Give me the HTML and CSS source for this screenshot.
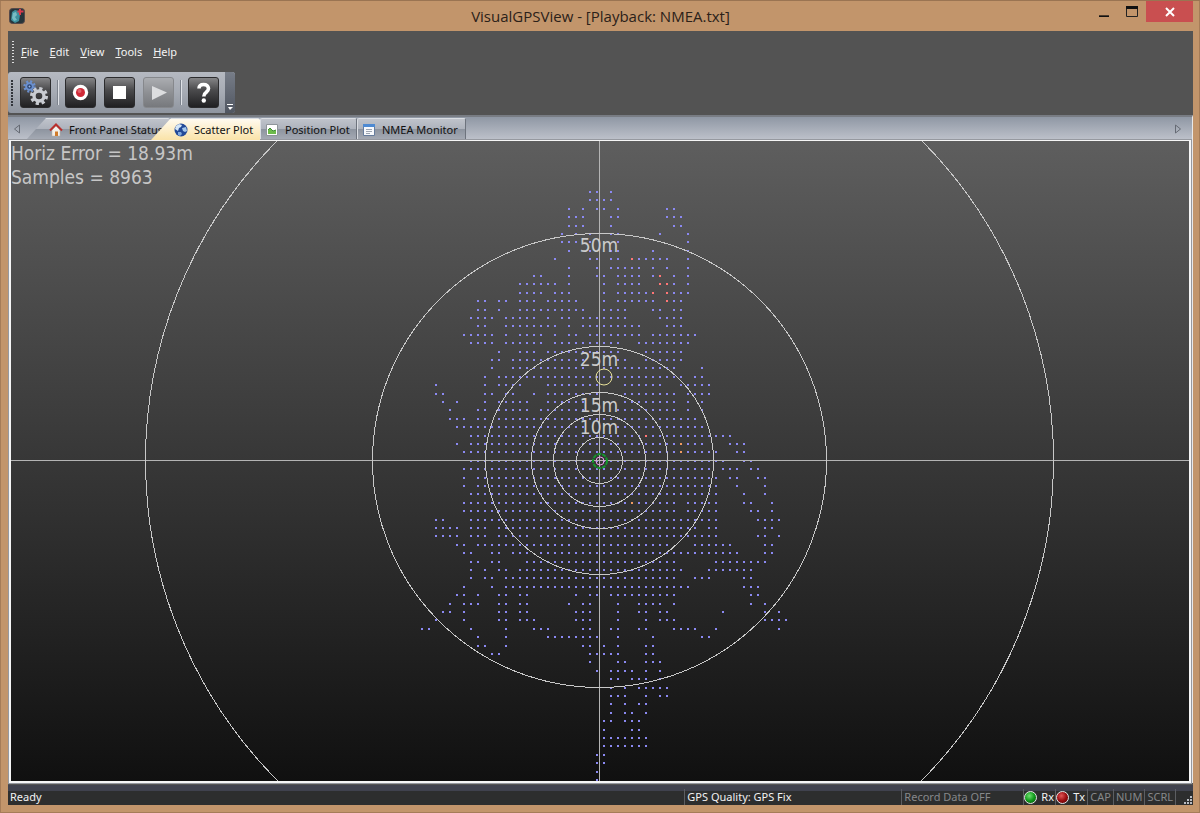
FILE: index.html
```html
<!doctype html>
<html lang="en-us">
  <head>
    <meta charset="utf-8">
    <meta name="viewport" content="width=device-width, initial-scale=1">
    <title>VisualGPSView - [Playback: NMEA.txt]</title>
    <link rel="stylesheet" href="styles.css">
    <script src="plot.js" defer></script>
  </head>

  <body>
    <header class="titlebar">
      <svg class="app-icon" viewBox="0 0 16 16">
        <rect x="0.5" y="0.5" width="15" height="15" rx="3" fill="#26343a" stroke="#55494a"/>
        <path d="M3 4l3-2 4 1 1 4-1 6-4 2-4-3z" fill="#3f8f9d"/>
        <path d="M4 5l3-1 1 3-2 2 2 3-3 1-2-3z" fill="#78bcc4"/>
        <path d="M11 1v6M8.500 3.500h6" stroke="#d93a4c" stroke-width="2"/>
      </svg>
      <h1>VisualGPSView - [Playback: NMEA.txt]</h1>
      <div class="winbuttons">
        <button class="min" aria-label="Minimize"><svg viewBox="0 0 12 12"><path d="M0 11h12" stroke="#111" stroke-width="2"/></svg></button>
        <button class="max" aria-label="Maximize"><svg viewBox="0 0 12 12"><path d="M0.500 1v9.500h11V1" fill="none" stroke="#222"/><path d="M0 1.500h12" stroke="#111" stroke-width="3"/></svg></button>
        <button class="close" aria-label="Close"><svg viewBox="0 0 10 10"><path d="M1 1l8 8M9 1l-8 8" stroke="#fff" stroke-width="2"/></svg></button>
      </div>
    </header>

    <main class="client">
      <nav class="menubar">
        <span class="grip"></span>
        <button><u>F</u>ile</button>
        <button><u>E</u>dit</button>
        <button><u>V</u>iew</button>
        <button><u>T</u>ools</button>
        <button><u>H</u>elp</button>
      </nav>

      <div class="toolbar">
        <span class="grip dark"></span>
        <button class="tool" aria-label="Settings">
          <svg viewBox="0 0 29 29">
            <circle cx="8.500" cy="8.500" r="5" fill="none" stroke="#6b90cf" stroke-width="2.400" stroke-dasharray="2 1.930"/>
            <circle cx="8.500" cy="8.500" r="3.300" fill="#28406c" stroke="#6b90cf" stroke-width="2"/>
            <circle cx="8.500" cy="8.500" r="1" fill="#9fb8e4"/>
            <circle cx="18" cy="18" r="7.500" fill="none" stroke="#c9ccd2" stroke-width="3" stroke-dasharray="3.200 2.690"/>
            <circle cx="18" cy="18" r="5" fill="none" stroke="#c9ccd2" stroke-width="3.400"/>
          </svg>
        </button>
        <span class="sep"></span>
        <button class="tool" aria-label="Record">
          <svg viewBox="0 0 29 29"><circle cx="14.500" cy="14.500" r="7.700" fill="#fff"/><circle cx="14.500" cy="14.500" r="4.500" fill="#cf2a38"/><circle cx="13.500" cy="13" r="2" fill="#e06169"/></svg>
        </button>
        <button class="tool" aria-label="Stop">
          <svg viewBox="0 0 29 29"><path d="M8 8h13v13H8z" fill="#fff"/></svg>
        </button>
        <button class="tool off" aria-label="Play" disabled>
          <svg viewBox="0 0 29 29"><path d="M8 8l15 6.500L8 22z" fill="#dcdddf"/></svg>
        </button>
        <span class="sep"></span>
        <button class="tool" aria-label="Help">
          <svg viewBox="0 0 29 29"><path d="M10 10.500Q10 6.500 14.500 6.500T19.500 10.500Q19.500 12.500 17 14.500 14.800 16 14.800 18.500" fill="none" stroke="#fff" stroke-width="3.600"/><circle cx="14.800" cy="22.500" r="2.200" fill="#fff"/></svg>
        </button>
        <button class="overflow" aria-label="Toolbar options">
          <svg viewBox="0 0 8 8"><path d="M1 1.500h6" stroke="#fff"/><path d="M2 4h5L4 7z" fill="#fff"/></svg>
        </button>
      </div>

      <div class="tabs" role="tablist">
        <button class="scroll" aria-label="Scroll left"><svg viewBox="0 0 8 10"><path d="M6.500 1v8L1.500 5z" fill="none" stroke="#666b74"/></svg></button>
        <button class="tab slant panel" role="tab">
          <svg viewBox="0 0 14 14">
            <path d="M3 7l4-4 4 4v6H3z" fill="#f3f0ea" stroke="#bcb0a0" stroke-width="0.500"/>
            <path d="M6 8.500h3V13H6z" fill="#d07b2b"/>
            <path d="M1 7.500l6-6 6 6" fill="none" stroke="#b92f2c" stroke-width="2"/>
          </svg>
          <span>Front Panel Status</span>
        </button>
        <button class="tab slant scatter active" role="tab" aria-selected="true">
          <svg viewBox="0 0 14 14">
            <circle cx="7" cy="7" r="6.500" fill="#234a98"/>
            <path d="M2 3l3-2 3 1-1 2-2 1-1 3-3-2z" fill="#d4e6f7"/>
            <path d="M8 5l4-1 1 4-2 1-2-1z" fill="#a7c9ec"/>
            <path d="M4 9l3 0 1 2-2 2-2-1z" fill="#7fa8dc"/>
          </svg>
          <span>Scatter Plot</span>
        </button>
        <button class="tab position" role="tab">
          <svg viewBox="0 0 14 14">
            <path d="M1.500 1.500h11v11h-11z" fill="#fff" stroke="#8e949a"/>
            <path d="M3 7l2-2 3 3 3-1v4H3z" fill="#6dbb4b"/>
            <path d="M3 7l2-2 3 3 3-1" fill="none" stroke="#3f8d35"/>
          </svg>
          <span>Position Plot</span>
        </button>
        <button class="tab nmea" role="tab">
          <svg viewBox="0 0 14 14">
            <path d="M1.500 1.500h11v11h-11z" fill="#f7f9fc" stroke="#667c9c"/>
            <path d="M1 1h12v3H1z" fill="#4e8ad2"/>
            <path d="M4 6.500h6M4 8.500h6M4 10.500h4" stroke="#9da5b2"/>
          </svg>
          <span>NMEA Monitor</span>
        </button>
        <button class="scroll right" aria-label="Scroll right"><svg viewBox="0 0 8 10"><path d="M1.500 1v8L6.500 5z" fill="none" stroke="#666b74"/></svg></button>
      </div>

      <div class="view">
        <!-- origin is the reference position, y goes down -->
        <svg class="plot" viewBox="-589 -320 1178 640" preserveAspectRatio="xMidYMid slice">
          <path id="fixes" class="fix"/>
          <path id="fixes_dgps" class="fix dgps"/>
          <path id="fixes_none" class="fix none"/>
          <g class="rings" transform="translate(-0.5 -0.5)">
            <path d="M-589 0H590M0 -320V321" class="axis"/>
            <circle r="23"/>
            <circle r="46"/>
            <circle r="68"/>
            <circle r="114"/>
            <circle r="227"/>
            <circle r="454"/>
          </g>
          <g class="labels">
            <text x="-1" y="-209">50m</text>
            <text x="-1" y="-95">25m</text>
            <text x="-1" y="-49">15m</text>
            <text x="-1" y="-27">10m</text>
          </g>
          <circle class="current" cx="4" cy="-84" r="8"/>
          <circle class="mean" r="7"/>
          <circle class="center" r="4"/>
        </svg>
        <div class="readout">
          <p>Horiz Error = 18.93m</p>
          <p>Samples = 8963</p>
        </div>
      </div>

      <footer class="status">
        <span class="ready">Ready</span>
        <span class="pane quality">GPS Quality: GPS Fix</span>
        <span class="pane record dim">Record Data OFF</span>
        <span class="pane led"><i class="rx"></i>Rx</span>
        <span class="pane led"><i class="tx"></i>Tx</span>
        <span class="pane dim">CAP</span>
        <span class="pane dim">NUM</span>
        <span class="pane dim">SCRL</span>
        <span class="pane corner">
          <svg viewBox="0 0 8 8"><path d="M6 0h2v2H6zM3 3h2v2H3zM6 3h2v2H6zM0 6h2v2H0zM3 6h2v2H3zM6 6h2v2H6z" fill="#b9bcc2"/></svg>
        </span>
      </footer>
    </main>
  </body>
</html>
```
FILE: styles.css
```css
* {
	box-sizing: border-box;
}

html, body {
	height: 100%;
	margin: 0;
}

body {
	display: flex;
	flex-direction: column;
	padding: 0 7px 8px 8px;
	background-color: #c2956b;
	border-top: 1px solid #9a7452;
	box-shadow: inset 1px 0 #a57c58, inset -1px -1px #a57c58;
	font-family: "Noto Sans", "Open Sans", sans-serif;
	font-size: 11px;
	overflow: hidden;
}

button {
	margin: 0;
	padding: 0;
	border: 0;
	background: none;
	color: inherit;
	font: inherit;
}

svg {
	display: block;
}

/* title bar */

.titlebar {
	display: grid;
	grid-template-columns: 1fr auto 1fr;
	flex: none;
	height: 30px;
}

.app-icon {
	width: 16px;
	height: 16px;
	margin: 7px 0 0 1px;
}

.titlebar h1 {
	margin: 0;
	font-family: "Open Sans", sans-serif;
	font-size: 15px;
	font-weight: normal;
	line-height: 30px;
	color: #2b2119;
}

.winbuttons {
	display: flex;
	justify-content: flex-end;
}

.winbuttons button {
	display: flex;
	justify-content: center;
	align-items: center;
	width: 28px;
	height: 21px;
}

.winbuttons svg {
	width: 12px;
	height: 12px;
}

.winbuttons .min svg {
	height: 10px;
}

.winbuttons .close {
	width: 47px;
	background-color: #c94f50;
}

.winbuttons .close svg {
	width: 10px;
	height: 10px;
}

.client {
	display: flex;
	flex-direction: column;
	flex: 1;
	min-height: 0;
	background-color: #535353;
}

/* menu and toolbar */

.grip {
	width: 2px;
	height: 22px;
	background: repeating-linear-gradient(#ddd 0 1px, transparent 1px 3px);
}

.grip.dark {
	height: 26px;
	background: repeating-linear-gradient(#33363c 0 2px, transparent 2px 3px);
}

.menubar {
	display: flex;
	align-items: center;
	flex: none;
	gap: 11px;
	height: 41px;
	padding-left: 4px;
	color: #f4f4f4;
}

.menubar .grip {
	margin-right: -4px;
}

.toolbar {
	display: flex;
	align-items: center;
	align-self: flex-start;
	flex: none;
	height: 41px;
	padding-left: 3px;
	border-radius: 3px;
	background: linear-gradient(#b5b9c1, #a6abb4 50%, #8f959f);
	overflow: hidden;
}

.toolbar .grip {
	margin-right: 3px;
}

.tool {
	width: 31px;
	height: 31px;
	margin: 0 4px;
	border: 1px solid #2c2c2e;
	border-radius: 3px;
	background: linear-gradient(#858587, #4c4c4e 40%, #202022);
}

.tool.off {
	border-color: #86888c;
	background: linear-gradient(#abadb1, #8e9094 50%, #77797d);
}

.sep {
	width: 2px;
	height: 25px;
	margin: 0 2px;
	border-left: 1px solid #7c828c;
	background-color: #dfe2e7;
}

.overflow {
	display: flex;
	align-items: flex-end;
	justify-content: center;
	width: 10px;
	height: 41px;
	margin-left: 2px;
	padding-bottom: 2px;
	background: linear-gradient(#777d88, #505661);
}

.overflow svg {
	width: 8px;
	height: 8px;
}

/* tabs */

.tabs {
	display: flex;
	align-items: flex-end;
	flex: none;
	height: 25px;
	margin-top: 2px;
	border-top: 2px solid #787c83;
	border-right: 1px solid #e8e8e8;
	background: linear-gradient(#8f97a4, #bec2cb);
	color: #111;
}

.scroll {
	align-self: center;
	width: 18px;
	padding-left: 5px;
}

.scroll svg {
	width: 8px;
	height: 10px;
}

.scroll.right {
	width: 18px;
	margin-left: auto;
	padding: 0;
}

.tab {
	display: flex;
	align-items: center;
	flex: none;
	gap: 6px;
	height: 22px;
	padding-left: 4px;
	border: 1px solid #dadde2;
	border-right-color: #6d737d;
	border-bottom: 0;
	border-radius: 2px 2px 0 0;
	background: linear-gradient(#bfc3cb, #adb2bc 48%, #8e95a0 50%, #a6abb5);
	white-space: nowrap;
}

.tab svg {
	flex: none;
	width: 14px;
	height: 14px;
}

.tab.slant {
	padding-left: 23px;
	border-width: 1px 0 0;
	clip-path: polygon(20px 0, 100% 0, 100% 100%, 0 100%);
}

.panel {
	width: 144px;
}

.scatter {
	width: 109px;
	margin-left: -19px;
}

.position {
	width: 97px;
}

.nmea {
	width: 109px;
}

.tab.active {
	z-index: 1;
	background: linear-gradient(#fffaf0, #fdf0cf 45%, #fae3a8);
}

/* scatter plot */

.view {
	position: relative;
	flex: 1;
	min-height: 0;
	margin: 0 2px 0 1px;
	border: 2px solid #f5f5f5;
	border-top-width: 1px;
	outline: 1px solid #9699a0;
	box-shadow: 2px 0 #e8e8e8;
	background: linear-gradient(#5e5e5e, #101010);
}

.plot {
	width: 100%;
	height: 100%;
}

.rings {
	fill: none;
	stroke: #c8c8c8;
	stroke-width: 1;
	shape-rendering: crispEdges;
}

.axis {
	stroke: #b4b4b4;
}

.labels {
	font-family: "DejaVu Sans Condensed", "DejaVu Sans", sans-serif;
	font-size: 19px;
	text-anchor: middle;
	fill: #cccccc;
}

.fix {
	fill: #8b89f2;
}

.dgps {
	fill: #ff7676;
}

.none {
	fill: #f09a60;
}

.current {
	fill: none;
	stroke: #e9e29a;
}

.mean {
	fill: none;
	stroke: #129a2c;
	stroke-width: 2;
	stroke-dasharray: 4 1;
}

.center {
	fill: none;
	stroke: #e49be4;
}

.readout {
	position: absolute;
	top: 0;
	left: 0;
	font-family: "DejaVu Sans Condensed", "DejaVu Sans", sans-serif;
	font-size: 19px;
	line-height: 24px;
	color: #c6c6c6;
}

.readout p {
	margin: 0;
}

/* status bar */

.status {
	display: flex;
	align-items: stretch;
	flex: none;
	height: 20px;
	margin-top: 2px;
	padding: 4px 0 0 2px;
	background: linear-gradient(#40424e 0 6px, #2d2e2e 6px);
	line-height: 16px;
	color: #f2f2f2;
}

.ready {
	flex: 1;
}

.pane {
	padding: 0 2px;
	border-left: 1px solid #5c5e62;
	white-space: nowrap;
}

.quality {
	width: 217px;
}

.record {
	width: 122px;
}

.dim {
	color: #86888a;
}

.led {
	display: flex;
	align-items: center;
	gap: 4px;
	width: 32px;
	padding: 0;
}

.led i {
	width: 13px;
	height: 13px;
	border: 1px solid #e6e6e6;
	border-radius: 50%;
}

.rx {
	background: radial-gradient(circle at 40% 35%, #6fe06f, #119a1c 50%, #064b0b);
}

.tx {
	background: radial-gradient(circle at 40% 35%, #e05656, #9b0d10 50%, #4d0506);
}

.corner {
	display: flex;
	align-items: flex-end;
	justify-content: flex-end;
	width: 18px;
	padding: 0 1px 1px 0;
}

.corner svg {
	width: 8px;
	height: 8px;
}
```
FILE: plot.js
```javascript
// one string per latitude step (north first), runs of longitude steps "from:to"
var rows = [
	"-2:-1 1",
	"-2:1",
	"-5 -3 -1:0 2 9:10",
	"-5:-3 1:2 9:11",
	"-5:-3 1 10:11",
	"-6 -4 -2 1:2 8 12",
	"-6:-4 -2 2 12",
	"-5 -2 1:2 7 12",
	"-7 -2:-1 1:2 5:9 12",
	"-5 -1 1:5 7 9 12",
	"-10:-9 -5 -1:0 2:5 7 10 12",
	"-12:-7 -5 0 2:5 10 12",
	"-12:-9 -7:-5 0 2:6 10:12",
	"-18:-17 -15:-14 -12:-10 -8:-4 0 2:7 10:11",
	"-18:-17 -15 -12:-3 0:3 7:8 10:11",
	"-19:-16 -14:-10 -8 -6:-5 -3:3 8:11",
	"-18:-17 -14:-7 -5 -3:5 9:11",
	"-20:-16 -14 -12:-9 -7 -5:-4 -2:5 7:13",
	"-19:-16 -14:-9 -7:2 5:12",
	"-15 -12:-10 -8:2 6:11",
	"-16:-15 -13:-3 2:3 6:11",
	"-16 -13:-3 0:10 14",
	"-17 -15:11 13:14",
	"-24 -17 -15:-12 -8:-1 3:8 11:15",
	"-24:-23 -17:-16 -14:-13 -10 -8:-1 3:10 12:15",
	"-23 -21 -17 -15:-11 -8:-3 3:10 12 14",
	"-22 -18:-17 -15:-11 -9:-3 2:10 12 14",
	"-22:-20 -18:-17 -15:13",
	"-21:-20 -19:-3 2:14",
	"-19:5 7:18",
	"-21 -19:10 12:14 18:20",
	"-20:10 12:16 19:20",
	"-19:17 20:21",
	"-20:15 17:19 21:22",
	"-20 -18:16 18:19 22:23",
	"-20 -18:16 19 23",
	"-19:16 20 23",
	"-20:3 5:10 12:16 20:21 24",
	"-20:10 12:16 21:22 24",
	"-24:-23 -19:16 22:25",
	"-24:-21 -19:-17 -15:13 15:16 23:24",
	"-24:-21 -19:-17 -15:-11 -9:16 22:23 25",
	"-21:-20 -18:-5 -3:9 13:18 23:24",
	"-20:-19 -16:-15 -13:-11 -9:19 23:24",
	"-19:-18 -16:-15 -11:10 16:23",
	"-19 -17 -15:-14 -12:11 15:21",
	"-19 -17:-16 -14:10 13:15 20:21",
	"-20 -16 -14:12 20:22",
	"-21:-20 -18 -15:-14 -12:-11 -4 -2:-1 1:10 21:22",
	"-22 -20:-18 -15:-14 -12:-11 -5 -3:-2 2 5:8 10 21 23",
	"-23:-22 -20 -15:-14 -12:-11 -4:-2 2 5:6 8:9 17 23 25",
	"-24 -20 -15:-14 -12:-10 -4:-2 2 6 8:10 23:26",
	"-26:-25 -19 -14 -10:-8 -3:-2 1:2 5:6 10:13 16 25",
	"-18 -14 -8:-1 2 7 14:15",
	"-18:-17 -14 -3:-2 0 2 6:7",
	"-16:-15 -2:2 6:7",
	"-2 2:3 6:8",
	"-1 1:4 6 8",
	"1:2 4:6 8",
	"1 3 5:9",
	"1:3 6 8:9",
	"1 3 5:6",
	"1 3:4 6",
	"0:1 3:5",
	"0 4:5",
	"0:6",
	"0:6",
	"-1:0",
	"-1:0",
	"-1",
	"-1"
];

var STEP_X = 7;
var STEP_Y = 8.4;

function dot(col, row)
{
	var x = 3 + col * STEP_X;
	var y = Math.round(-270 + row * STEP_Y);
	return "M" + x + " " + y + "h2v2h-2z";
}

function draw(id, points)
{
	var d = points.map(function (p) {
		return dot(p[0], p[1]);
	}).join("");
	document.getElementById(id).setAttribute("d", d);
}

var points = [];
rows.forEach(function (line, row) {
	line.split(" ").forEach(function (run) {
		var ends = run.split(":").map(Number);
		var last = ends.length > 1 ? ends[1] : ends[0];
		for (var col = ends[0]; col <= last; col++)
			points.push([col, row]);
	});
});

draw("fixes", points);
draw("fixes_dgps", [[4, 8], [8, 10], [8, 11], [9, 11], [7, 12], [9, 12], [9, 13], [6, 29]]);
draw("fixes_none", [[11, 30], [11, 31], [4, 37]]);
```
